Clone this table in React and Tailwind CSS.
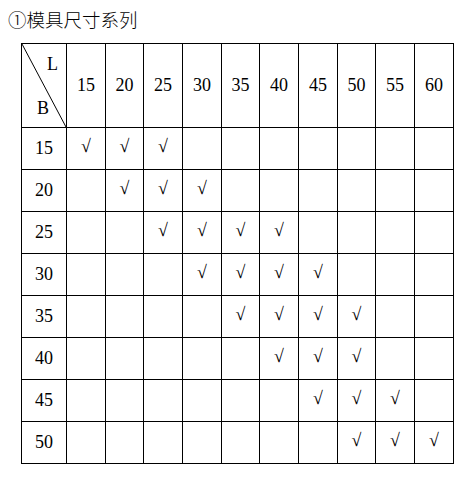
import React from "react";

const L = [15, 20, 25, 30, 35, 40, 45, 50, 55, 60];
const widths = ["w-[39px]", "w-[38px]", "w-[39px]", "w-[39px]", "w-[38px]", "w-[39px]", "w-[39px]", "w-[38px]", "w-[39px]", "w-[39px]"];
const rows = [
  [15, [15, 20, 25]],
  [20, [20, 25, 30]],
  [25, [25, 30, 35, 40]],
  [30, [30, 35, 40, 45]],
  [35, [35, 40, 45, 50]],
  [40, [40, 45, 50]],
  [45, [45, 50, 55]],
  [50, [50, 55, 60]],
];

const serif = "font-['Liberation_Serif',serif]";

export default function App() {
  return (
    <div className="w-[463px] h-[477px] bg-white overflow-hidden text-black">
      <div className="h-[43px] pl-[8px] pt-[8px] text-[18.5px] leading-[22px] font-light font-['Noto_Sans_CJK_SC',sans-serif]">
        ①模具尺寸系列
      </div>
      <div className={`ml-[21px] w-fit border-l border-t border-black ${serif}`}>
        <div className="flex">
          <div className="relative w-[45px] h-[84px] border-r border-b border-black">
            <svg className="absolute inset-0 w-full h-full" viewBox="0 0 44 83" preserveAspectRatio="none">
              <line x1="0" y1="0" x2="44" y2="83" stroke="black" strokeWidth="1" />
            </svg>
            <div className="absolute left-[25px] top-[10px] text-[18px] leading-[20px]">L</div>
            <div className="absolute left-[15px] top-[54px] text-[18px] leading-[20px]">B</div>
          </div>
          {L.map((v, i) => (
            <div
              key={v}
              className={`${widths[i]} h-[84px] border-r border-b border-black flex items-center justify-center text-[18px]`}
            >
              {v}
            </div>
          ))}
        </div>
        {rows.map(([b, checks]) => (
          <div key={b} className="flex">
            <div className="w-[45px] h-[42px] border-r border-b border-black flex items-center justify-center text-[18px]">
              {b}
            </div>
            {L.map((v, i) => (
              <div
                key={v}
                className={`${widths[i]} h-[42px] border-r border-b border-black flex items-center justify-center text-[18px] pb-[4px]`}
              >
                {checks.includes(v) ? "√" : ""}
              </div>
            ))}
          </div>
        ))}
      </div>
    </div>
  );
}
